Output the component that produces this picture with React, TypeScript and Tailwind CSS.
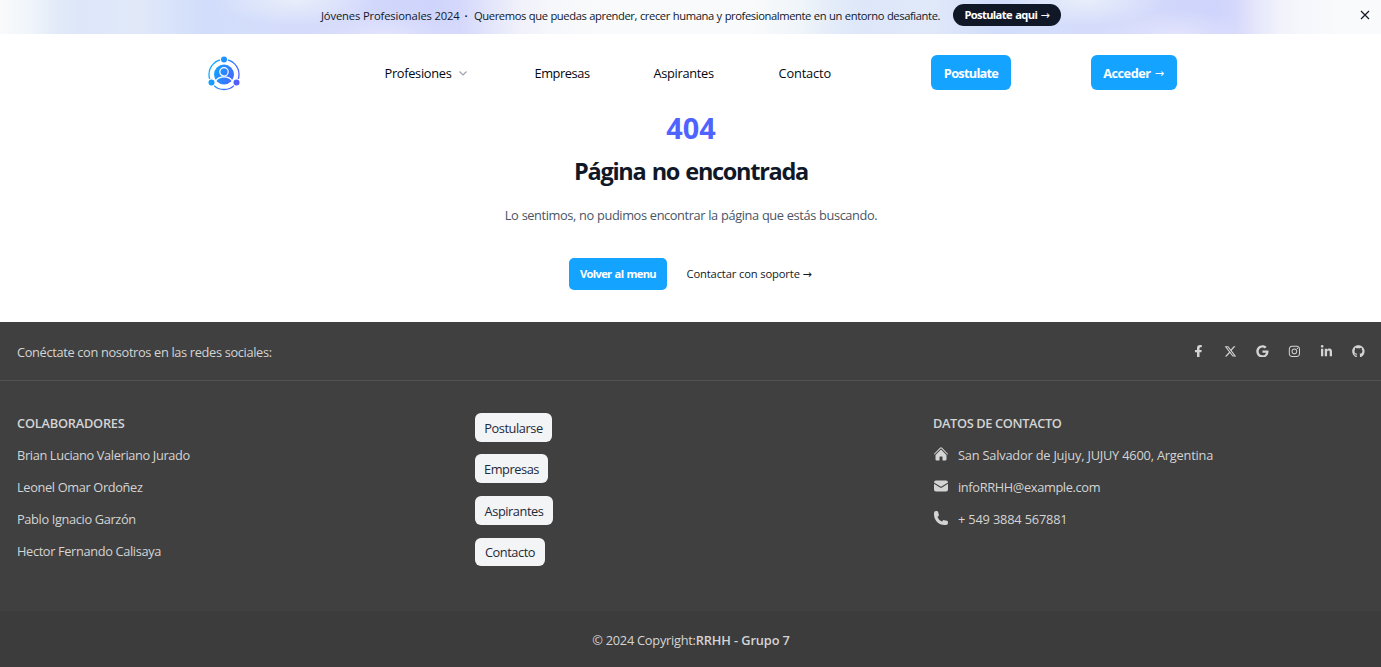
import { FaFacebookF, FaGoogle, FaInstagram, FaLinkedinIn, FaGithub } from "react-icons/fa";
import { FaXTwitter } from "react-icons/fa6";

const blue = "bg-[#14a3ff]";

function Arrow() {
  return <span className="font-['DejaVu_Sans',sans-serif] text-[11px] leading-none font-normal tracking-normal">→</span>;
}

function Logo() {
  return (
    <svg width="34" height="36" viewBox="0 0 34 36" fill="none">
      <defs>
        <linearGradient id="brand" gradientUnits="userSpaceOnUse" x1="1" y1="12" x2="33" y2="24">
          <stop stopColor="#00b4ff" />
          <stop offset="1" stopColor="#5558ff" />
        </linearGradient>
      </defs>
      <circle cx="17" cy="19.500" r="15" stroke="url(#brand)" strokeWidth="1.3" />
      <g fill="white">
        <circle cx="17" cy="4.500" r="4" />
        <circle cx="4.500" cy="27.500" r="3.900" />
        <circle cx="29.500" cy="27.500" r="3.900" />
      </g>
      <g fill="url(#brand)">
        <circle cx="17" cy="4.500" r="3" />
        <circle cx="4.500" cy="27.500" r="3" />
        <circle cx="29.500" cy="27.500" r="3" />
        <circle cx="17" cy="19.500" r="10" />
      </g>
      <circle cx="17" cy="16.800" r="4.200" stroke="white" strokeWidth="1.2" />
      <path d="M9 25.800c1.500-2.600 4.600-3.900 8-3.900s6.500 1.300 8 3.900" stroke="white" strokeWidth="1.200" />
    </svg>
  );
}

function Banner() {
  return (
    <div className="flex h-[34px] items-start bg-[#f9fafb] bg-[radial-gradient(ellipse_80px_26px_at_295px_0px,#e8eefa_0%,#e8eefa00_100%),radial-gradient(ellipse_80px_24px_at_385px_34px,#e2e3fc_0%,#e2e3fc00_100%),radial-gradient(ellipse_80px_26px_at_1085px_0px,#e8eefa_0%,#e8eefa00_100%),radial-gradient(ellipse_80px_24px_at_1175px_34px,#e2e3fc_0%,#e2e3fc00_100%),linear-gradient(90deg,#f9fafb_0px,#f0f5fa_30px,#e3ebf9_55px,#dde7f9_80px,#dfe8f9_110px,#e1e9f9_140px,#d9e3fa_170px,#d1ddfb_205px,#d3defb_240px,#d5dcfb_290px,#d3d9fb_350px,#ced4fb_430px,#d5d8fb_460px,#e3e5fb_490px,#f0f1fa_520px,#f6f7fb_550px,#f9fafb_600px,#f9fafb_750px,#f0f5fa_800px,#e3ebf9_835px,#dde7f9_865px,#dfe8f9_900px,#e1e9f9_930px,#d9e3fa_960px,#d1ddfb_995px,#d3defb_1030px,#d5dcfb_1080px,#d3d9fb_1140px,#ced4fb_1215px,#d5d8fb_1235px,#e5e6fb_1255px,#f1f2fb_1280px,#f6f7fb_1300px,#f9fafb_1340px)]">
      <div className="flex w-full items-start pl-[321px] text-[11.2px] leading-[22px] text-gray-900">
        <p className="mt-[5px] w-[153px] whitespace-nowrap">
          <span className="font-medium tracking-[-0.13px]">Jóvenes Profesionales 2024</span>
          <span className="ml-[5px] font-bold">·</span>
        </p>
        <p className="mt-[5px] w-[479px] whitespace-nowrap tracking-[-0.4px] [word-spacing:0.35px]">
          Queremos que puedas aprender, crecer humana y profesionalmente en un entorno desafiante.
        </p>
        <button className="mt-1 h-[22px] w-[108px] rounded-full bg-gray-900 whitespace-nowrap font-bold tracking-[-0.65px] [word-spacing:1px] text-white">
          Postulate aqui <Arrow />
        </button>
        <button aria-label="Cerrar" className="mt-[10px] mr-[11px] ml-auto">
          <svg width="10" height="10" viewBox="0 0 10 10" stroke="#111827" strokeWidth="1.2">
            <path d="M1 1l8 8M9 1l-8 8" />
          </svg>
        </button>
      </div>
    </div>
  );
}

function Header() {
  return (
    <header className="flex h-[77px] items-center pl-[207px] text-[12.8px] font-medium text-gray-950">
      <div className="w-[177.500px]"><Logo /></div>
      <a className="flex w-[150px] items-center gap-[7px] pt-[2px] tracking-[-0.3px]">
        Profesiones
        <svg className="ml-px" width="8" height="5" viewBox="0 0 8 5" fill="none" stroke="#9ca3af" strokeWidth="1.2">
          <path d="M.5.500 4 4 7.500.500" />
        </svg>
      </a>
      <a className="w-[119px] pt-[2px] tracking-[-0.42px]">Empresas</a>
      <a className="w-[125px] pt-[2px] tracking-[-0.3px]">Aspirantes</a>
      <a className="w-[152.500px] pt-[2px] tracking-[-0.15px]">Contacto</a>
      <a className={`mr-20 flex h-[35px] w-20 items-center justify-center rounded-md ${blue} pt-[2px] font-bold tracking-[-0.75px] text-white`}>Postulate</a>
      <a className={`flex h-[35px] w-[86px] items-center justify-center gap-1 rounded-md ${blue} pt-[2px] pr-px whitespace-nowrap font-bold tracking-[-0.5px] text-white`}>Acceder <Arrow /></a>
    </header>
  );
}

function NotFound() {
  return (
    <main className="flex h-[211px] flex-col items-center">
      <p className="mt-[2px] pl-px text-[28.8px] leading-[29px] font-bold text-[#4f63ff]">404</p>
      <h1 className="mt-[15px] pl-px text-[23.5px] leading-[29px] font-bold tracking-[-1.3px] [word-spacing:1.5px] text-gray-900">Página no encontrada</h1>
      <p className="mt-[18px] pl-px text-[12.8px] leading-[22px] tracking-[-0.41px] [word-spacing:0.35px] text-gray-600">
        Lo sentimos, no pudimos encontrar la página que estás buscando.
      </p>
      <div className="mt-[32px] flex items-center pl-px text-[11.2px]">
        <a className={`mr-[19.500px] flex h-8 w-[98px] items-center justify-center rounded-[5px] ${blue} font-bold tracking-[-0.72px] [word-spacing:1px] text-white`}>Volver al menu</a>
        <a className="w-[126.500px] whitespace-nowrap font-medium tracking-[-0.14px] text-gray-900">Contactar con soporte <Arrow /></a>
      </div>
    </main>
  );
}

const people = [
  "Brian Luciano Valeriano Jurado",
  "Leonel Omar Ordoñez",
  "Pablo Ignacio Garzón",
  "Hector Fernando Calisaya",
];

const links = [
  { label: "Postularse", cls: "w-[77px] h-[29px] mb-3" },
  { label: "Empresas", cls: "w-[73px] h-[29px] mb-[13px]" },
  { label: "Aspirantes", cls: "w-[78px] h-[29px] mb-[13px]" },
  { label: "Contacto", cls: "w-[70px] h-[28px]" },
];

const socials = [FaFacebookF, FaXTwitter, FaGoogle, FaInstagram, FaLinkedinIn, FaGithub];

function Footer() {
  return (
    <footer className="h-[345px] bg-neutral-700 text-[12.8px] leading-5 tracking-[-0.36px] text-[#d4d4d4]">
      <div className="flex h-[59px] items-center justify-between border-b border-[#535353] pt-[2px] pr-4 pl-[17px]">
        <span className="tracking-[-0.34px]">Conéctate con nosotros en las redes sociales:</span>
        <div className="flex gap-[19px] pb-[2px]">
          {socials.map((Icon, i) => (
            <a key={i} className="flex w-[13px] justify-center"><Icon size={12.8} /></a>
          ))}
        </div>
      </div>
      <div className="grid h-[230px] grid-cols-[458px_458px_1fr] pt-8 pl-[17px]">
        <section>
          <h6 className="mb-3 font-semibold tracking-[-0.23px]">COLABORADORES</h6>
          {people.map((name) => <p key={name} className="mb-3">{name}</p>)}
        </section>
        <section className="flex flex-col items-start">
          {links.map(({ label, cls }) => (
            <a key={label} className={`flex items-center justify-center rounded-md bg-gray-100 tracking-[-0.45px] text-gray-800 ${cls}`}>{label}</a>
          ))}
        </section>
        <section>
          <h6 className="mb-3 font-semibold">DATOS DE CONTACTO</h6>
          <p className="mb-3 flex gap-[9px] tracking-[-0.2px]">
            <svg className="mt-[1px]" width="16" height="16" viewBox="0 0 24 24" fill="currentColor">
              <path d="M11.47 3.84a.75.75 0 011.060 0l8.690 8.690a.75.75 0 101.060-1.060l-8.689-8.690a2.250 2.250 0 00-3.182 0l-8.690 8.690a.75.75 0 001.061 1.060l8.690-8.690z" />
              <path d="M12 5.432l8.159 8.159c.03.03.06.058.091.086v6.198c0 1.035-.84 1.875-1.875 1.875H15a.75.75 0 01-.75-.75v-4.500a.75.75 0 00-.75-.75h-3a.75.75 0 00-.75.75V21a.75.75 0 01-.75.75H5.625a1.875 1.875 0 01-1.875-1.875v-6.198a2.290 2.290 0 00.091-.086L12 5.432z" />
            </svg>
            San Salvador de Jujuy, JUJUY 4600, Argentina
          </p>
          <p className="mb-3 flex gap-[9px]">
            <svg className="mt-[1px]" width="16" height="16" viewBox="0 0 24 24" fill="currentColor">
              <path d="M1.500 8.670v8.580a3 3 0 003 3h15a3 3 0 003-3V8.670l-8.928 5.493a3 3 0 01-3.144 0L1.500 8.670z" />
              <path d="M22.500 6.908V6.750a3 3 0 00-3-3h-15a3 3 0 00-3 3v.158l9.714 5.978a1.500 1.500 0 001.572 0L22.500 6.908z" />
            </svg>
            infoRRHH@example.com
          </p>
          <p className="flex gap-[9px] tracking-[-0.17px]">
            <svg className="mt-[1px]" width="16" height="16" viewBox="0 0 24 24" fill="currentColor">
              <path d="M1.500 4.500a3 3 0 013-3h1.372c.86 0 1.610.586 1.819 1.420l1.105 4.423a1.875 1.875 0 01-.694 1.955l-1.293.97c-.135.101-.164.249-.126.352a11.285 11.285 0 006.697 6.697c.103.038.25.009.352-.126l.97-1.293a1.875 1.875 0 011.955-.694l4.423 1.105c.834.209 1.420.959 1.420 1.820V19.500a3 3 0 01-3 3h-2.250C8.552 22.500 1.500 15.448 1.500 6.750V4.500z" />
            </svg>
            + 549 3884 567881
          </p>
        </section>
      </div>
      <div className="flex h-14 items-center justify-center bg-black/5 pt-[2px] pl-px">
        <span className="tracking-[-0.25px]">© 2024 Copyright:</span>
        <span className="font-semibold tracking-[-0.12px]">RRHH - Grupo 7</span>
      </div>
    </footer>
  );
}

export default function App() {
  return (
    <div className="h-[667px] overflow-hidden bg-white font-['Open_Sans',sans-serif]">
      <Banner />
      <Header />
      <NotFound />
      <Footer />
    </div>
  );
}
